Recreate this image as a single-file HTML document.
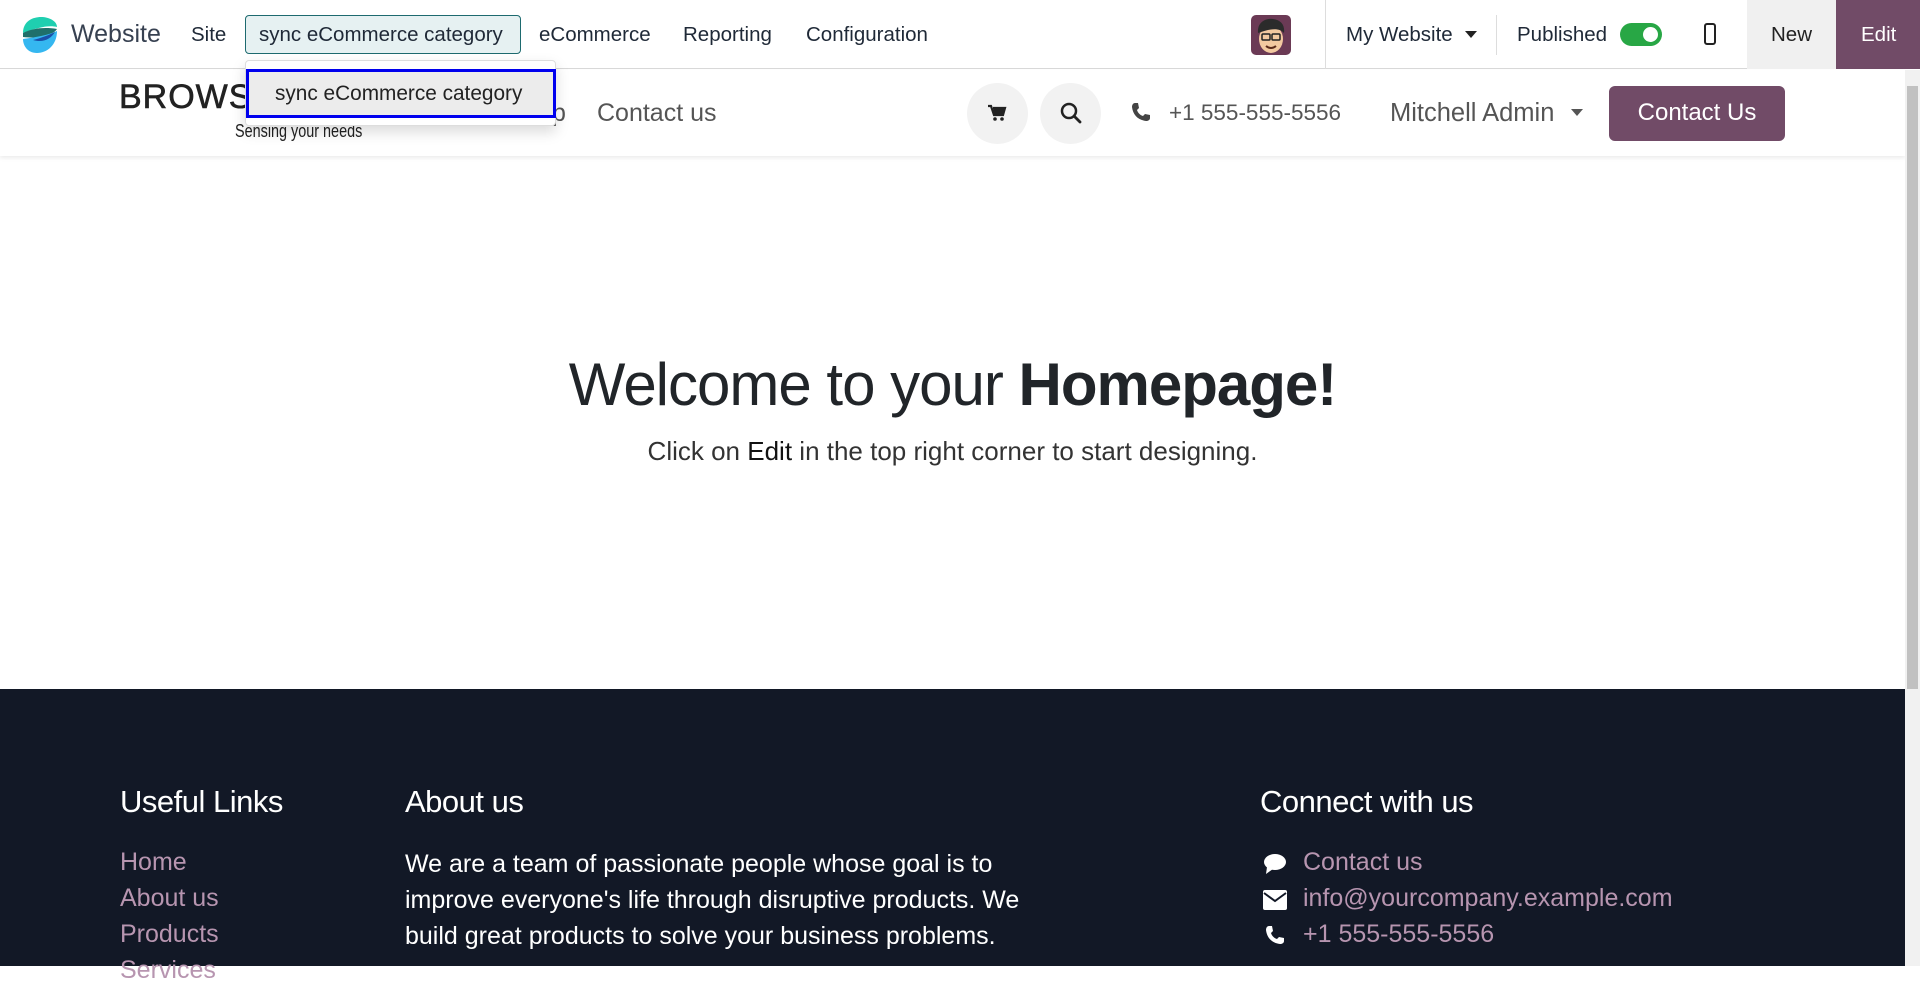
<!DOCTYPE html>
<html><head><meta charset="utf-8">
<style>
*{margin:0;padding:0;box-sizing:border-box}
body{width:1920px;height:966px;overflow:hidden;font-family:"Liberation Sans",sans-serif;background:#fff;position:relative;color:#212529}
.a{position:absolute;white-space:nowrap}
#top{position:absolute;left:0;top:0;width:1920px;height:69px;background:#fff;border-bottom:1px solid #d8d8d8}
.nv{font-size:20.5px;color:#1f2937;top:23px}
#hdr{position:absolute;left:0;top:70px;width:1905px;height:86px;background:#fff;box-shadow:0 2px 4px rgba(0,0,0,.08)}
.circ{position:absolute;width:61px;height:61px;border-radius:50%;background:#f2f2f2;top:83px}
#foot{position:absolute;left:0;top:689px;width:1905px;height:277px;background:#121826}
.fh{color:#fff;font-size:31px;top:784px;letter-spacing:-0.5px}
.fl{color:#b795b0;font-size:25px}
.ft{color:#fff;font-size:25px}
</style></head><body>
<div id="top">
 <svg class="a" style="left:19px;top:15px" width="40" height="40" viewBox="0 0 40 40">
  <path d="M4 18 C4 6 14 2 22 2 C30 2 38 6 38 12 C30 10 20 12 4 18Z" fill="#1fcfb0"/>
  <path d="M4 18 C14 13 26 12 38 14 C34 20 22 24 4 22Z" fill="#1f6f6a"/>
  <path d="M4 24 C18 22 30 20 38 16 C38 30 28 38 18 38 C8 38 4 30 4 24Z" fill="#35b7f0"/>
  <path d="M14 25 C22 23 30 20 36 17 C32 24 24 28 14 25Z" fill="#1b4fa8"/>
 </svg>
 <div class="a" style="left:71px;top:20px;font-size:25px;color:#374151">Website</div>
 <div class="a nv" style="left:191px">Site</div>
 <div class="a" style="left:245px;top:15px;width:276px;height:39px;background:#e6f1f2;border:1px solid #1d6a6f;border-radius:4px"></div>
 <div class="a nv" style="left:259px">sync eCommerce category</div>
 <div class="a nv" style="left:539px">eCommerce</div>
 <div class="a nv" style="left:683px">Reporting</div>
 <div class="a nv" style="left:806px">Configuration</div>
 <div class="a" style="left:1251px;top:15px;width:40px;height:40px;border-radius:5px;background:#6b3a55;overflow:hidden">
  <svg width="40" height="40" viewBox="0 0 40 40"><ellipse cx="20" cy="24" rx="12" ry="14" fill="#f3c9a0"/><path d="M7 18 C6 6 16 3 22 4 C30 5 34 10 33 18 C28 12 18 14 7 18Z" fill="#2b2b2b"/><rect x="11" y="19" width="8" height="6" rx="1" fill="none" stroke="#222" stroke-width="1.5"/><rect x="21" y="19" width="8" height="6" rx="1" fill="none" stroke="#222" stroke-width="1.5"/><path d="M15 31 Q20 35 25 31" stroke="#5a2a1a" stroke-width="2" fill="none"/></svg>
 </div>
 <div class="a" style="left:1325px;top:0;width:1px;height:69px;background:#ddd"></div>
 <div class="a nv" style="left:1346px">My Website</div>
 <div class="a" style="left:1465px;top:31px;border-left:6px solid transparent;border-right:6px solid transparent;border-top:7px solid #222"></div>
 <div class="a" style="left:1496px;top:15px;width:1px;height:40px;background:#ddd"></div>
 <div class="a nv" style="left:1517px">Published</div>
 <div class="a" style="left:1620px;top:23px;width:42px;height:23px;border-radius:12px;background:#28a745"></div>
 <div class="a" style="left:1643px;top:27px;width:15px;height:15px;border-radius:50%;background:#fff"></div>
 <div class="a" style="left:1704px;top:23px;width:12px;height:22px;border:2.5px solid #222;border-radius:3px"></div>
 <div class="a" style="left:1747px;top:0;width:89px;height:69px;background:#f0f0f0"></div>
 <div class="a nv" style="left:1771px;color:#222">New</div>
 <div class="a" style="left:1836px;top:0;width:84px;height:69px;background:#714b67"></div>
 <div class="a nv" style="left:1861px;color:#fff">Edit</div>
</div>

<div id="hdr"></div>
<div class="a" style="left:119px;top:78px;font-size:34px;color:#222;letter-spacing:1px;-webkit-text-stroke:0.6px #222">BROWS</div>
<div class="a" style="left:235px;top:121px;font-size:18px;color:#222;transform:scaleX(.8);transform-origin:left">Sensing your needs</div>
<div class="a" style="left:552px;top:99px;font-size:25px;color:#555">p</div>
<div class="a" style="left:597px;top:99px;font-size:25px;color:#555">Contact us</div>
<div class="circ" style="left:967px"></div>
<div class="circ" style="left:1040px"></div>
<svg class="a" style="left:987px;top:103px" width="20" height="20" viewBox="0 0 20 20"><path d="M1 3h3l3 9h9l2-7H6" fill="none" stroke="#222" stroke-width="2.2"/><path d="M6 5h12l-2 7H7z" fill="#222"/><circle cx="8" cy="16" r="1.8" fill="#222"/><circle cx="15" cy="16" r="1.8" fill="#222"/></svg>
<svg class="a" style="left:1059px;top:101px" width="24" height="24" viewBox="0 0 24 24"><circle cx="10" cy="10" r="7" fill="none" stroke="#222" stroke-width="2.5"/><path d="M15 15l6 6" stroke="#222" stroke-width="2.8" stroke-linecap="round"/></svg>
<svg class="a" style="left:1131px;top:102px" width="20" height="20" viewBox="0 0 20 20"><path d="M4 1 L7 1 L8 6 L6 8 C7 11 9 13 12 14 L14 12 L19 13 L19 16 C19 18 17 19 15 19 C7 18 2 13 1 5 C1 3 2 1 4 1Z" fill="#444"/></svg>
<div class="a" style="left:1169px;top:100px;font-size:22.5px;color:#555">+1 555-555-5556</div>
<div class="a" style="left:1390px;top:99px;font-size:25.5px;color:#555">Mitchell Admin</div>
<div class="a" style="left:1571px;top:109px;border-left:6px solid transparent;border-right:6px solid transparent;border-top:7px solid #555"></div>
<div class="a" style="left:1609px;top:86px;width:176px;height:55px;border-radius:6px;background:#714b67"></div>
<div class="a" style="left:1609px;top:99px;width:176px;text-align:center;font-size:24px;color:#fff">Contact Us</div>

<div class="a" style="left:245px;top:60px;width:311px;height:66px;background:#fff;border:1px solid #ddd;border-radius:4px;box-shadow:0 6px 14px rgba(0,0,0,.15)"></div>
<div class="a" style="left:246px;top:69px;width:310px;height:49px;background:#ececec;border:3px solid #0000ee"></div>
<div class="a" style="left:275px;top:82px;font-size:20.8px;color:#222">sync eCommerce category</div>

<div class="a" style="left:1905px;top:70px;width:15px;height:620px;background:#f1f1f1"></div>
<div class="a" style="left:1907px;top:86px;width:11px;height:660px;background:#c1c1c1"></div>

<div class="a" style="left:0;top:350px;width:1905px;text-align:center;font-size:60px;color:#212529;letter-spacing:-1px">Welcome to your <b>Homepage!</b></div>
<div class="a" style="left:0;top:436px;width:1905px;text-align:center;font-size:26px;color:#333">Click on <span style="color:#111">Edit</span> in the top right corner to start designing.</div>

<div id="foot"></div>
<div class="a" style="left:1905px;top:689px;width:15px;height:277px;background:#f1f1f1"></div>
<div class="a fh" style="left:120px">Useful Links</div>
<div class="a fh" style="left:405px">About us</div>
<div class="a fh" style="left:1260px">Connect with us</div>
<div class="a fl" style="left:120px;top:848px">Home</div>
<div class="a fl" style="left:120px;top:884px">About us</div>
<div class="a fl" style="left:120px;top:920px">Products</div>
<div class="a fl" style="left:120px;top:956px">Services</div>
<div class="a ft" style="left:405px;top:846px;line-height:36px">We are a team of passionate people whose goal is to<br>improve everyone's life through disruptive products. We<br>build great products to solve your business problems.</div>
<svg class="a" style="left:1263px;top:853px" width="24" height="22" viewBox="0 0 24 22"><ellipse cx="12" cy="9" rx="11" ry="8" fill="#fff"/><path d="M4 14 L3 21 L10 16Z" fill="#fff"/></svg>
<svg class="a" style="left:1263px;top:890px" width="24" height="20" viewBox="0 0 24 20"><rect x="0" y="0" width="24" height="20" rx="2" fill="#fff"/><path d="M1 3 L12 11 L23 3" fill="none" stroke="#121826" stroke-width="2"/></svg>
<svg class="a" style="left:1265px;top:924px" width="20" height="22" viewBox="0 0 20 20"><path d="M4 1 L7 1 L8 6 L6 8 C7 11 9 13 12 14 L14 12 L19 13 L19 16 C19 18 17 19 15 19 C7 18 2 13 1 5 C1 3 2 1 4 1Z" fill="#fff"/></svg>
<div class="a fl" style="left:1303px;top:848px">Contact us</div>
<div class="a fl" style="left:1303px;top:884px">info@yourcompany.example.com</div>
<div class="a fl" style="left:1303px;top:920px">+1 555-555-5556</div>
</body></html>
